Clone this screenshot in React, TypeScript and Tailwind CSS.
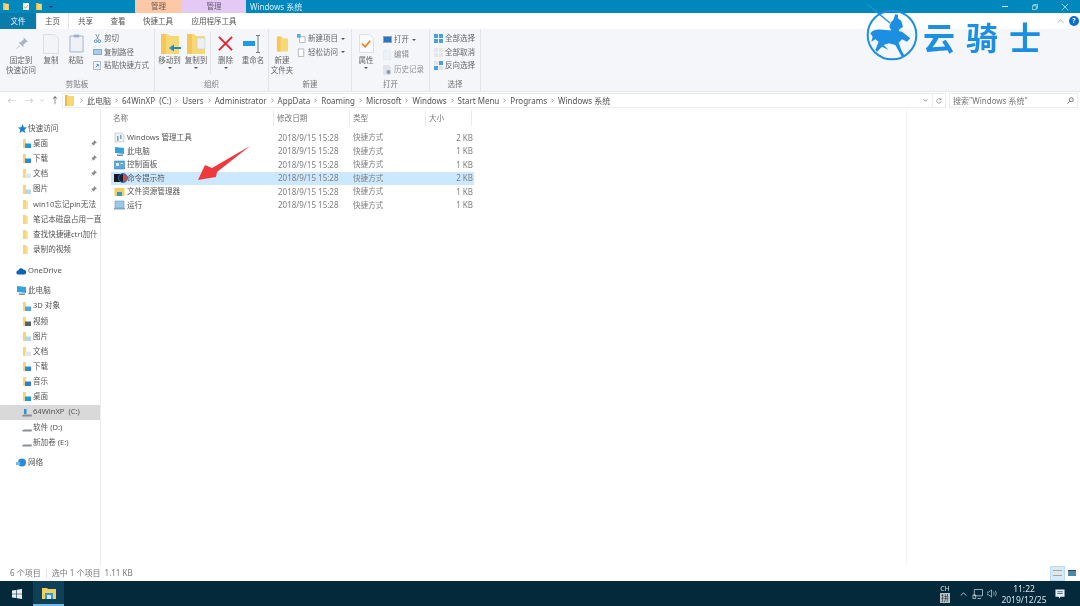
import React from "react";

const sans = "font-['Noto_Sans','Noto_Sans_CJK_SC',sans-serif]";

const Folder = ({ className = "w-[9px] h-[11px]" }: { className?: string }) => (
    <svg viewBox="0 0 9 11" className={className}>
        <path d="M0 0h3.500v1H9v10H0z" fill="#f7d774" />
        <path d="M0 0h2v11H0z" fill="#e9b949" />
    </svg>
);

const BigFolder = ({ children }: { children?: React.ReactNode }) => (
    <svg viewBox="0 0 22 22" className="w-[22px] h-[22px]">
        <path d="M2 1h7l2 2h9v18H2z" fill="#f8d775" />
        <path d="M2 1h5v20H2z" fill="#f5c65a" />
        {children}
    </svg>
);

const NavFolder = ({ accent }: { accent?: string }) => (
    <svg viewBox="0 0 11 11" className="w-[11px] h-[11px] shrink-0">
        <path d="M2 1h3v9H2z" fill="#f7d774" />
        {accent ? <path d="M4 5.500h6V10H4z" fill={accent} /> : <path d="M5 2h2v8H5z" fill="#fae29c" />}
    </svg>
);

const Drive = ({ win }: { win?: boolean }) => (
    <svg viewBox="0 0 12 11" className="w-[12px] h-[11px] shrink-0">
        {win && <path d="M3 2h2.500v5H3z" fill="#2f8fd0" />}
        <path d="M1 8.500l2-1h8L10.500 9.500H1.500z" fill="#8a8f94" />
    </svg>
);

const NavRow = ({ icon, label, pin, active, top, indent = true }: { icon: React.ReactNode; label: string; pin?: boolean; active?: boolean; top?: boolean; indent?: boolean }) => (
    <div className={`h-[15.150px] flex items-center whitespace-nowrap ${active ? "bg-[#d9d9d9]" : ""} ${indent ? "pl-[21px]" : "pl-[16px]"} ${top ? "mt-[5px]" : ""}`}>
        <span className="w-[11px] flex justify-center shrink-0">{icon}</span>
        <span className="ml-[1px] text-[7.600px] text-[#555] flex-1 whitespace-pre">{label}</span>
        {pin && (
            <svg viewBox="0 0 8 8" className="w-[7px] h-[7px] mr-[3px] shrink-0">
                <path d="M5 0l3 3-1.500.500L5 5.500l-.500 1L1.500 3.500l1-.500 2-1.500zM2.500 5L.500 7.500 3 5.500z" fill="#8d8d8d" />
            </svg>
        )}
    </div>
);

const Star = () => (
    <svg viewBox="0 0 10 10" className="w-[10px] h-[10px]">
        <path d="M5.500 0l1.300 3.300 3.200.200-2.500 2.200.800 3.300-2.800-1.800L2.500 9l.9-3.300L1 3.500l3.200-.200z" fill="#1b7fd0" />
    </svg>
);

const Cloud = () => (
    <svg viewBox="0 0 11 8" className="w-[11px] h-[8px]">
        <path d="M2.500 7.500a2 2 0 0 1-.300-4A3 3 0 0 1 7.700 2.800 2.400 2.400 0 0 1 8.500 7.500z" fill="#0b63b5" />
    </svg>
);

const Pc = () => (
    <svg viewBox="0 0 11 11" className="w-[11px] h-[11px]">
        <path d="M1 1l9 1v6L1 7z" fill="#35a2e0" />
        <path d="M3 8.500h6v1.500H3z" fill="#7d8a96" />
    </svg>
);

const Net = () => (
    <svg viewBox="0 0 11 11" className="w-[11px] h-[11px]">
        <circle cx="6" cy="5.500" r="4" fill="#2d8bd6" />
        <path d="M0 5h4v3H0z" fill="#6cbcec" />
    </svg>
);

const BigBtn = ({ icon, lines, caret, width }: { icon: React.ReactNode; lines: string[]; caret?: boolean; width: string }) => (
    <div className={`flex flex-col items-center shrink-0 ${width}`}>
        <div className="h-[23px] flex items-center justify-center">{icon}</div>
        <div className="mt-[1px] text-[7.500px] leading-[9.500px] text-[#666] text-center whitespace-nowrap">
            {lines.map((line) => (
                <div key={line}>{line}</div>
            ))}
        </div>
        {caret && <div className="mt-[1px] w-0 h-0 border-x-[2px] border-x-transparent border-t-[2px] border-t-[#555]" />}
    </div>
);

const SmallBtn = ({ icon, label, muted, caret }: { icon: React.ReactNode; label: string; muted?: boolean; caret?: boolean }) => (
    <div className="h-[13.500px] flex items-center gap-[2px] whitespace-nowrap">
        <span className="w-[10px] h-[10px] flex items-center justify-center shrink-0">{icon}</span>
        <span className={`text-[7.500px] ${muted ? "text-[#909090]" : "text-[#666]"}`}>{label}</span>
        {caret && <span className="ml-[1px] w-0 h-0 border-x-[2px] border-x-transparent border-t-[2px] border-t-[#555]" />}
    </div>
);

const Group = ({ label, width, children }: { label: string; width: string; children: React.ReactNode }) => (
    <div className={`h-full flex flex-col border-r border-[#e2e3e6] shrink-0 ${width}`}>
        <div className="flex-1 flex pt-[3px]">{children}</div>
        <div className="h-[12px] mb-[1px] text-center text-[7.500px] leading-[12px] text-[#777]">{label}</div>
    </div>
);

const Page = ({ className = "w-[16px] h-[20px]", fill = "#f3f4f6", children }: { className?: string; fill?: string; children?: React.ReactNode }) => (
    <svg viewBox="0 0 16 20" className={className}>
        <path d="M.5.500h11l4 4v15H.5z" fill={fill} stroke="#dcdee2" />
        {children}
    </svg>
);

const Chevron = () => (
    <svg viewBox="0 0 4 6" className="w-[3px] h-[5px] mx-[4px] shrink-0">
        <path d="M.5.500L3 3 .5 5.500" stroke="#777" fill="none" />
    </svg>
);

const crumbs = ["此电脑", "64WinXP  (C:)", "Users", "Administrator", "AppData", "Roaming", "Microsoft", "Windows", "Start Menu", "Programs", "Windows 系统"];

const files = [
    { name: "Windows 管理工具", size: "2 KB", icon: "tools" },
    { name: "此电脑", size: "1 KB", icon: "pc" },
    { name: "控制面板", size: "1 KB", icon: "panel" },
    { name: "命令提示符", size: "2 KB", icon: "cmd", selected: true },
    { name: "文件资源管理器", size: "1 KB", icon: "explorer" },
    { name: "运行", size: "1 KB", icon: "run" },
];

const FileIcon = ({ kind }: { kind: string }) => {
    if (kind === "pc") return <Pc />;
    if (kind === "panel")
        return (
            <svg viewBox="0 0 11 10" className="w-[11px] h-[10px]">
                <path d="M.5 1h10v8H.5z" fill="#5aa9dc" stroke="#3a84b8" strokeWidth=".6" />
                <path d="M2 3h3v3H2zM6.500 3H9v1H6.500z" fill="#d8eefb" />
            </svg>
        );
    if (kind === "cmd")
        return (
            <svg viewBox="0 0 11 10" className="w-[11px] h-[10px]">
                <path d="M0 1h11v8H0z" fill="#1b1b1b" />
            </svg>
        );
    if (kind === "explorer")
        return (
            <svg viewBox="0 0 11 10" className="w-[11px] h-[10px]">
                <path d="M.5 1h10v8H.5z" fill="#f5ce62" />
                <path d="M3 5h5v4H3z" fill="#2e9ad8" />
            </svg>
        );
    if (kind === "run")
        return (
            <svg viewBox="0 0 11 10" className="w-[11px] h-[10px]">
                <path d="M1 1h9v7H1z" fill="#9cc8e8" stroke="#6d9cbe" strokeWidth=".6" />
                <path d="M0 8h11v1.500H0z" fill="#7fa6c4" />
            </svg>
        );
    return (
        <svg viewBox="0 0 11 11" className="w-[11px] h-[11px]">
            <path d="M1 1h7l2 2v7H1z" fill="#f0f2f3" stroke="#b6bcc2" strokeWidth=".6" />
            <path d="M3 4h1.500v5H3zM6 3h1.500v4H6z" fill="#7ea3bf" />
        </svg>
    );
};

const App: React.FC = () => {
    return (
        <div className={`relative w-[1080px] h-[606px] overflow-hidden flex flex-col bg-white blur-[0.4px] ${sans}`}>
            {/* title bar */}
            <div className="h-[13px] bg-[#0088bd] flex items-stretch shrink-0">
                <div className="w-[135px] flex items-center pl-[3px] gap-[7px]">
                    <Folder className="w-[6px] h-[7px]" />
                    <svg viewBox="0 0 7 8" className="ml-[7px] w-[6px] h-[7px]">
                        <path d="M0 0h7v8H0z" fill="#fff" />
                        <path d="M1 4l2 2 3-4" stroke="#e8622c" fill="none" />
                    </svg>
                    <Folder className="w-[6px] h-[7px]" />
                    <span className="w-0 h-0 border-x-[2px] border-x-transparent border-t-[2px] border-t-[#0a2a3a]" />
                </div>
                <div className="w-[47px] bg-[#fdc8a8] text-[7.500px] leading-[13px] text-center text-[#6d5a4e]">管理</div>
                <div className="w-[64px] bg-[#e4c9f5] text-[7.500px] leading-[13px] text-center text-[#655a70]">管理</div>
                <div className="pl-[4px] text-[8px] leading-[13px] text-[#d9f0fa] flex-1">Windows 系统</div>
                <div className="flex items-center">
                    <div className="w-[30px] flex justify-center">
                        <div className="w-[6px] h-px bg-[#d8eef8]" />
                    </div>
                    <div className="w-[30px] flex justify-center">
                        <svg viewBox="0 0 7 7" className="w-[6px] h-[6px]">
                            <path d="M.5 2h4.500v4.500H.5zM2 2V.500h4.500V5H5" stroke="#d8eef8" strokeWidth=".8" fill="none" />
                        </svg>
                    </div>
                    <div className="w-[30px] flex justify-center">
                        <svg viewBox="0 0 7 7" className="w-[6px] h-[6px]">
                            <path d="M0 0l7 7M7 0L0 7" stroke="#d8eef8" strokeWidth=".8" />
                        </svg>
                    </div>
                </div>
            </div>

            {/* ribbon tabs */}
            <div className="h-[16px] flex shrink-0 text-[7.500px] leading-[16px] text-[#555] text-center">
                <div className="w-[36px] bg-[#0a7cab] text-[#e5f4fb]">文件</div>
                <div className="w-[33px] border-x border-[#e6e6e6]">主页</div>
                <div className="w-[33px]">共享</div>
                <div className="w-[32px]">查看</div>
                <div className="w-[48px]">快捷工具</div>
                <div className="w-[64px]">应用程序工具</div>
            </div>

            {/* ribbon */}
            <div className="h-[63px] bg-[#f5f6fa] flex border-b border-[#e6e7ea] shrink-0">
                <Group label="剪贴板" width="w-[155px]">
                    <BigBtn
                        width="w-[42px]"
                        lines={["固定到", "快速访问"]}
                        icon={
                            <svg viewBox="0 0 16 16" className="w-[15px] h-[15px]">
                                <path d="M10 1l5 5-2 .500-3 3 0 2.500L5 7l2.500-.500 3-3zM5.500 10L1 15l5-4z" fill="#a9b3c7" />
                            </svg>
                        }
                    />
                    <BigBtn width="w-[18px]" lines={["复制"]} icon={<Page />} />
                    <BigBtn
                        width="w-[32px]"
                        lines={["粘贴"]}
                        icon={
                            <svg viewBox="0 0 16 20" className="w-[15px] h-[19px]">
                                <path d="M1 2h14v17H1z" fill="#eef1f6" stroke="#9fb0c6" />
                                <path d="M5 .500h6v3H5z" fill="#9fb0c6" />
                            </svg>
                        }
                    />
                    <div className="flex flex-col">
                        <SmallBtn
                            label="剪切"
                            icon={
                                <svg viewBox="0 0 10 10" className="w-[9px] h-[9px]">
                                    <path d="M3 0l3 6M7 0L4 6" stroke="#8a8f96" fill="none" />
                                    <circle cx="3" cy="8" r="1.500" fill="none" stroke="#3f82c6" />
                                    <circle cx="7" cy="8" r="1.500" fill="none" stroke="#3f82c6" />
                                </svg>
                            }
                        />
                        <SmallBtn label="复制路径" icon={<div className="w-[9px] h-[6px] bg-[#a9cdea] border border-[#7fa9cf]" />} />
                        <SmallBtn
                            label="粘贴快捷方式"
                            icon={
                                <svg viewBox="0 0 9 10" className="w-[8px] h-[9px]">
                                    <path d="M.5.500h8v9h-8z" fill="#eef1f6" stroke="#9fb0c6" />
                                    <path d="M3 7l3-3M4 4h2v2" stroke="#3f82c6" fill="none" />
                                </svg>
                            }
                        />
                    </div>
                </Group>
                <Group label="组织" width="w-[114px]">
                    <BigBtn
                        width="w-[27px] ml-[1px]"
                        lines={["移动到"]}
                        caret
                        icon={
                            <BigFolder>
                                <path d="M22 14h-7v-2.500L10 15l5 3.500V16h7z" fill="#1e88d8" />
                            </BigFolder>
                        }
                    />
                    <BigBtn
                        width="w-[26px]"
                        lines={["复制到"]}
                        caret
                        icon={
                            <BigFolder>
                                <path d="M12 5h8v11h-8z" fill="#eceff4" stroke="#c9ccd2" strokeWidth=".6" />
                            </BigFolder>
                        }
                    />
                    <div className="w-px h-[42px] bg-[#e2e3e6] mx-[1px]" />
                    <BigBtn
                        width="w-[27px]"
                        lines={["删除"]}
                        caret
                        icon={
                            <svg viewBox="0 0 16 16" className="w-[15px] h-[15px]">
                                <path d="M1 1l14 14M15 1L1 15" stroke="#e3222a" strokeWidth="2" />
                            </svg>
                        }
                    />
                    <BigBtn
                        width="w-[28px]"
                        lines={["重命名"]}
                        icon={
                            <svg viewBox="0 0 20 18" className="w-[20px] h-[18px]">
                                <path d="M0 6h12v5H0z" fill="#1e9be6" />
                                <path d="M15 1v16M13 .500h4M13 17.500h4" stroke="#777" />
                            </svg>
                        }
                    />
                </Group>
                <Group label="新建" width="w-[83px]">
                    <BigBtn
                        width="w-[26px]"
                        lines={["新建", "文件夹"]}
                        icon={
                            <svg viewBox="0 0 14 18" className="w-[13px] h-[18px]">
                                <path d="M1 1h5l2 2h5v14H1z" fill="#f8d775" />
                                <path d="M1 1h4v16H1z" fill="#f5c65a" />
                            </svg>
                        }
                    />
                    <div className="pl-[1px] flex flex-col">
                        <SmallBtn
                            label="新建项目"
                            caret
                            icon={
                                <svg viewBox="0 0 10 10" className="w-[9px] h-[9px]">
                                    <path d="M3 3h6v6.500H3z" fill="#fff" stroke="#a9b3bf" />
                                    <path d="M0 0h4v4H0z" fill="#58a8e2" />
                                </svg>
                            }
                        />
                        <SmallBtn
                            label="轻松访问"
                            caret
                            icon={
                                <svg viewBox="0 0 10 10" className="w-[9px] h-[9px]">
                                    <path d="M1.500 1h6v8.500h-6z" fill="#fff" stroke="#a9b3bf" />
                                </svg>
                            }
                        />
                    </div>
                </Group>
                <Group label="打开" width="w-[78px]">
                    <BigBtn
                        width="w-[28px]"
                        lines={["属性"]}
                        caret
                        icon={
                            <Page className="w-[15px] h-[19px]" fill="#fbfbfc">
                                <path d="M3 10l3.500 3.500L12 7" stroke="#ef7d22" strokeWidth="1.800" fill="none" />
                            </Page>
                        }
                    />
                    <div className="pl-[2px] pt-[1px] flex flex-col gap-[1.500px]">
                        <SmallBtn label="打开" caret icon={<div className="w-[9px] h-[7px] bg-[#2677c8] border border-[#9aa3ad]" />} />
                        <SmallBtn label="编辑" muted icon={<Page className="w-[8px] h-[10px]" fill="#edf2f8" />} />
                        <SmallBtn
                            label="历史记录"
                            muted
                            icon={
                                <Page className="w-[8px] h-[10px]" fill="#dfe3ea">
                                    <circle cx="11" cy="14" r="4" fill="#7f9bbd" />
                                </Page>
                            }
                        />
                    </div>
                </Group>
                <Group label="选择" width="w-[51px]">
                    <div className="pl-[3px] flex flex-col">
                        <SmallBtn
                            label="全部选择"
                            icon={
                                <svg viewBox="0 0 9 9" className="w-[9px] h-[9px]">
                                    <path d="M0 0h4v4H0zM5 0h4v4H5zM0 5h4v4H0zM5 5h4v4H5z" fill="#4a9fe0" />
                                </svg>
                            }
                        />
                        <SmallBtn
                            label="全部取消"
                            icon={
                                <svg viewBox="0 0 9 9" className="w-[9px] h-[9px]">
                                    <path d="M0 0h4v4H0zM5 0h4v4H5zM0 5h4v4H0zM5 5h4v4H5z" fill="#e4e6ea" />
                                </svg>
                            }
                        />
                        <SmallBtn
                            label="反向选择"
                            icon={
                                <svg viewBox="0 0 9 9" className="w-[9px] h-[9px]">
                                    <path d="M5 0h4v4H5zM0 5h4v4H0z" fill="#4a9fe0" />
                                    <path d="M0 0h4v4H0zM5 5h4v4H5z" fill="#dfe3ea" />
                                </svg>
                            }
                        />
                    </div>
                </Group>
            </div>

            {/* address bar */}
            <div className="h-[17px] flex items-center shrink-0">
                <div className="w-[62px] flex items-center text-[9px] leading-none text-[#c4c4c4]">
                    <span className="w-[24px] text-center">←</span>
                    <span className="w-[10px] text-center">→</span>
                    <span className="w-[16px] flex justify-center">
                        <svg viewBox="0 0 6 4" className="w-[4px] h-[3px]">
                            <path d="M.5.500L3 3 5.500.500" stroke="#b8b8b8" fill="none" />
                        </svg>
                    </span>
                    <span className="w-[10px] text-center text-[#555]">↑</span>
                </div>
                <div className="w-[884px] h-[15px] border border-[#ececec] flex items-center pl-[2px] text-[8px] text-[#555] whitespace-nowrap">
                    <Folder />
                    <span className="w-[2px]" />
                    {crumbs.map((crumb) => (
                        <React.Fragment key={crumb}>
                            <Chevron />
                            <span className="whitespace-pre">{crumb}</span>
                        </React.Fragment>
                    ))}
                    <span className="flex-1" />
                    <svg viewBox="0 0 6 4" className="w-[5px] h-[3px] mr-[4px]">
                        <path d="M.5.500L3 3 5.500.500" stroke="#666" fill="none" />
                    </svg>
                    <span className="w-[13px] h-full border-l border-[#ececec] flex items-center justify-center">
                        <svg viewBox="0 0 8 8" className="w-[6px] h-[6px]">
                            <path d="M6.500 2A3 3 0 1 0 7 4.500M6.800.500V2.500H4.800" stroke="#666" fill="none" strokeWidth=".8" />
                        </svg>
                    </span>
                </div>
                <div className="ml-[3px] w-[129px] h-[15px] border border-[#ececec] flex items-center justify-between px-[3px] text-[8px] text-[#777]">
                    <span>搜索"Windows 系统"</span>
                    <svg viewBox="0 0 9 9" className="w-[7px] h-[7px]">
                        <circle cx="5.500" cy="3.500" r="2.500" fill="none" stroke="#555" />
                        <path d="M3.500 5.500L.5 8.500" stroke="#555" />
                    </svg>
                </div>
            </div>

            {/* main */}
            <div className="flex-1 flex min-h-0">
                <div className="w-[101px] border-r border-[#ededed] pt-[12px] shrink-0">
                    <NavRow indent={false} icon={<Star />} label="快速访问" />
                    <NavRow icon={<NavFolder accent="#1a9be0" />} label="桌面" pin />
                    <NavRow icon={<NavFolder accent="#2b8ad6" />} label="下载" pin />
                    <NavRow icon={<NavFolder accent="#dfe6ee" />} label="文档" pin />
                    <NavRow icon={<NavFolder accent="#b9d6ee" />} label="图片" pin />
                    <NavRow icon={<NavFolder />} label="win10忘记pin无法" />
                    <NavRow icon={<NavFolder />} label="笔记本磁盘占用一直" />
                    <NavRow icon={<NavFolder />} label="查找快捷键ctrl加什" />
                    <NavRow icon={<NavFolder />} label="录制的视频" />
                    <div className="mt-[6px]">
                        <NavRow indent={false} icon={<Cloud />} label="OneDrive" />
                    </div>
                    <NavRow top indent={false} icon={<Pc />} label="此电脑" />
                    <NavRow icon={<NavFolder accent="#4ea6df" />} label="3D 对象" />
                    <NavRow icon={<NavFolder accent="#54606c" />} label="视频" />
                    <NavRow icon={<NavFolder accent="#b9d6ee" />} label="图片" />
                    <NavRow icon={<NavFolder accent="#dfe6ee" />} label="文档" />
                    <NavRow icon={<NavFolder accent="#2b8ad6" />} label="下载" />
                    <NavRow icon={<NavFolder accent="#2f7fd0" />} label="音乐" />
                    <NavRow icon={<NavFolder accent="#1a9be0" />} label="桌面" />
                    <NavRow active icon={<Drive win />} label="64WinXP  (C:)" />
                    <NavRow icon={<Drive />} label="软件 (D:)" />
                    <NavRow icon={<Drive />} label="新加卷 (E:)" />
                    <NavRow top indent={false} icon={<Net />} label="网络" />
                </div>
                <div className="flex-1 pl-[10px] pt-[1px]">
                    <div className="h-[16px] flex items-center text-[7.600px] text-[#777] mb-[5px]">
                        <span className="w-[163px] pl-[2px] h-full leading-[16px] border-r border-[#ebebeb]">名称</span>
                        <span className="w-[76px] pl-[3px] h-full leading-[16px] border-r border-[#ebebeb]">修改日期</span>
                        <span className="w-[76px] pl-[3px] h-full leading-[16px] border-r border-[#ebebeb]">类型</span>
                        <span className="w-[46px] pl-[3px] h-full leading-[16px] border-r border-[#ebebeb]">大小</span>
                    </div>
                    {files.map((file) => (
                        <div key={file.name} className={`w-[363px] h-[13.500px] flex items-center ${file.selected ? "bg-[#cce8ff]" : ""}`}>
                            <span className="w-[16px] pl-[3px] flex shrink-0">
                                <FileIcon kind={file.icon} />
                            </span>
                            <span className="w-[151px] text-[7.600px] text-[#555] whitespace-nowrap">{file.name}</span>
                            <span className="w-[75px] text-[8px] text-[#808080]">2018/9/15 15:28</span>
                            <span className="w-[76px] text-[7.600px] text-[#808080]">快捷方式</span>
                            <span className="w-[45px] text-[8px] text-right text-[#808080] pr-[1px]">{file.size}</span>
                        </div>
                    ))}
                </div>
                <div className="w-[174px] border-l border-[#f3f3f3] shrink-0" />
            </div>

            {/* status bar */}
            <div className="h-[16px] flex items-center pl-[10px] text-[8px] text-[#777] shrink-0">
                <span>6 个项目</span>
                <span className="w-px h-[9px] bg-[#e3e3e3] mx-[5px]" />
                <span className="whitespace-pre">选中 1 个项目  1.11 KB</span>
                <span className="flex-1" />
                <div className="w-[15px] h-[15px] bg-[#d6e9f6] border border-[#bcdcf2] flex items-center justify-center">
                    <div className="w-[9px] h-[6px] border-y border-[#b49f92]" />
                </div>
                <div className="w-[14px] h-[15px] flex items-center justify-center mr-[1px]">
                    <div className="w-[8px] h-[6px] bg-[#4d8aa8] border-t border-[#2c3e50]" />
                </div>
            </div>

            {/* taskbar */}
            <div className="h-[25px] bg-[#04293b] flex items-center shrink-0 text-[#d7e2e8]">
                <div className="w-[33px] flex justify-center">
                    <svg viewBox="0 0 10 10" className="w-[10px] h-[10px]">
                        <path d="M0 1.500l4.200-.600v3.800H0zM4.800.800L10 0v4.700H4.800zM0 5.300h4.200v3.800L0 8.500zM4.800 5.300H10V10l-5.200-.700z" fill="#e8eef2" />
                    </svg>
                </div>
                <div className="w-[31px] h-full bg-[#0e4058] border-b-2 border-[#6fb8dc] flex items-center justify-center">
                    <svg viewBox="0 0 14 12" className="w-[14px] h-[12px]">
                        <path d="M0 1h5l1 1h8v10H0z" fill="#f5ce62" />
                        <path d="M3 6h8v6H3z" fill="#2e9ad8" />
                        <path d="M5 8h4v4H5z" fill="#cfeafa" />
                    </svg>
                </div>
                <span className="flex-1" />
                <div className="w-[12px] flex flex-col items-center">
                    <span className="text-[7px] leading-[9px]">CH</span>
                    <span className="w-[10px] h-[10px] bg-[#b9c2c7] text-[#22313a] text-[8px] leading-[10px] text-center">拼</span>
                </div>
                <svg viewBox="0 0 8 5" className="ml-[9px] w-[7px] h-[4px]">
                    <path d="M.5 4.500L4 1l3.500 3.500" stroke="#d7e2e8" fill="none" />
                </svg>
                <svg viewBox="0 0 12 11" className="ml-[5px] w-[11px] h-[10px]">
                    <path d="M2.500.500h9v7h-9zM1 6.500h3v4H1zM6 10.500h4" stroke="#d7e2e8" fill="#04293b" strokeWidth=".8" />
                </svg>
                <svg viewBox="0 0 11 9" className="ml-[4px] w-[10px] h-[9px]">
                    <path d="M0 3h2l3-2.500v8L2 6H0z" fill="none" stroke="#d7e2e8" strokeWidth=".7" />
                    <path d="M7 2.500c1 1.200 1 2.800 0 4M9 1.500c1.500 2 1.500 4 0 6" stroke="#d7e2e8" fill="none" strokeWidth=".7" />
                </svg>
                <div className="ml-[4px] w-[46px] text-center text-[8.500px] leading-[11px]">
                    <div>11:22</div>
                    <div>2019/12/25</div>
                </div>
                <div className="w-[26px] mr-[7px] flex justify-center">
                    <svg viewBox="0 0 11 11" className="w-[10px] h-[10px]">
                        <path d="M.5.500h10v8H6L5 10.500 4 8.500H.5z" fill="#e8eef2" />
                        <path d="M2.500 3h6M2.500 5h6" stroke="#04293b" strokeWidth=".7" />
                    </svg>
                </div>
            </div>

            {/* collapse and help buttons */}
            <svg viewBox="0 0 8 5" className="absolute left-[1057px] top-[19px] w-[7px] h-[4px]">
                <path d="M.5 4.500L4 1l3.500 3.500" stroke="#999" fill="none" />
            </svg>
            <div className="absolute left-[1069px] top-[16px] w-[10px] h-[10px] rounded-full bg-[#0a6fd0] text-white text-[7px] leading-[10px] text-center font-bold">?</div>

            {/* watermark */}
            <div className="absolute left-[862px] top-0 flex items-start">
                <svg viewBox="0 0 180 192" className="w-[60px] h-[64px]">
                    <circle cx="90" cy="105" r="73" fill="none" stroke="#1d8fe3" strokeWidth="6" />
                    <path d="M15 12L85 70" stroke="#1d8fe3" strokeWidth="4" />
                    <path d="M100 42l8 3v10l10 8 5 18-10 6-5 10H90l-8-18 6-14 6-6z" fill="#1d8fe3" />
                    <path
                        d="M25 100C35 85 55 88 70 90L105 92 120 95 145 115 135 125 120 118 110 128 118 150 130 172 118 168 100 135 80 130 65 135 80 150 60 140 45 155 40 150 50 125 40 118 28 125 32 110z"
                        fill="#1d8fe3"
                    />
                </svg>
                <span className="mt-[20px] ml-[1px] text-[32px] leading-none font-bold tracking-[11px] text-[#1d8fe3] font-['Noto_Sans_CJK_SC',sans-serif] whitespace-nowrap">
                    云骑士
                </span>
            </div>

            {/* annotation arrow and cursor ring */}
            <svg viewBox="0 0 56 38" className="absolute left-[195px] top-[144px] w-[56px] h-[38px]">
                <path d="M55 2L22 28l-1 5L3 36l7-15 7 3z" fill="#f0393c" />
            </svg>
            <div className="absolute left-[118px] top-[173px] w-[10px] h-[10px] rounded-full border-[1.500px] border-[#1a6fe0] bg-[linear-gradient(90deg,#222_50%,#c9504a_50%)]" />
        </div>
    );
};

export default App;
